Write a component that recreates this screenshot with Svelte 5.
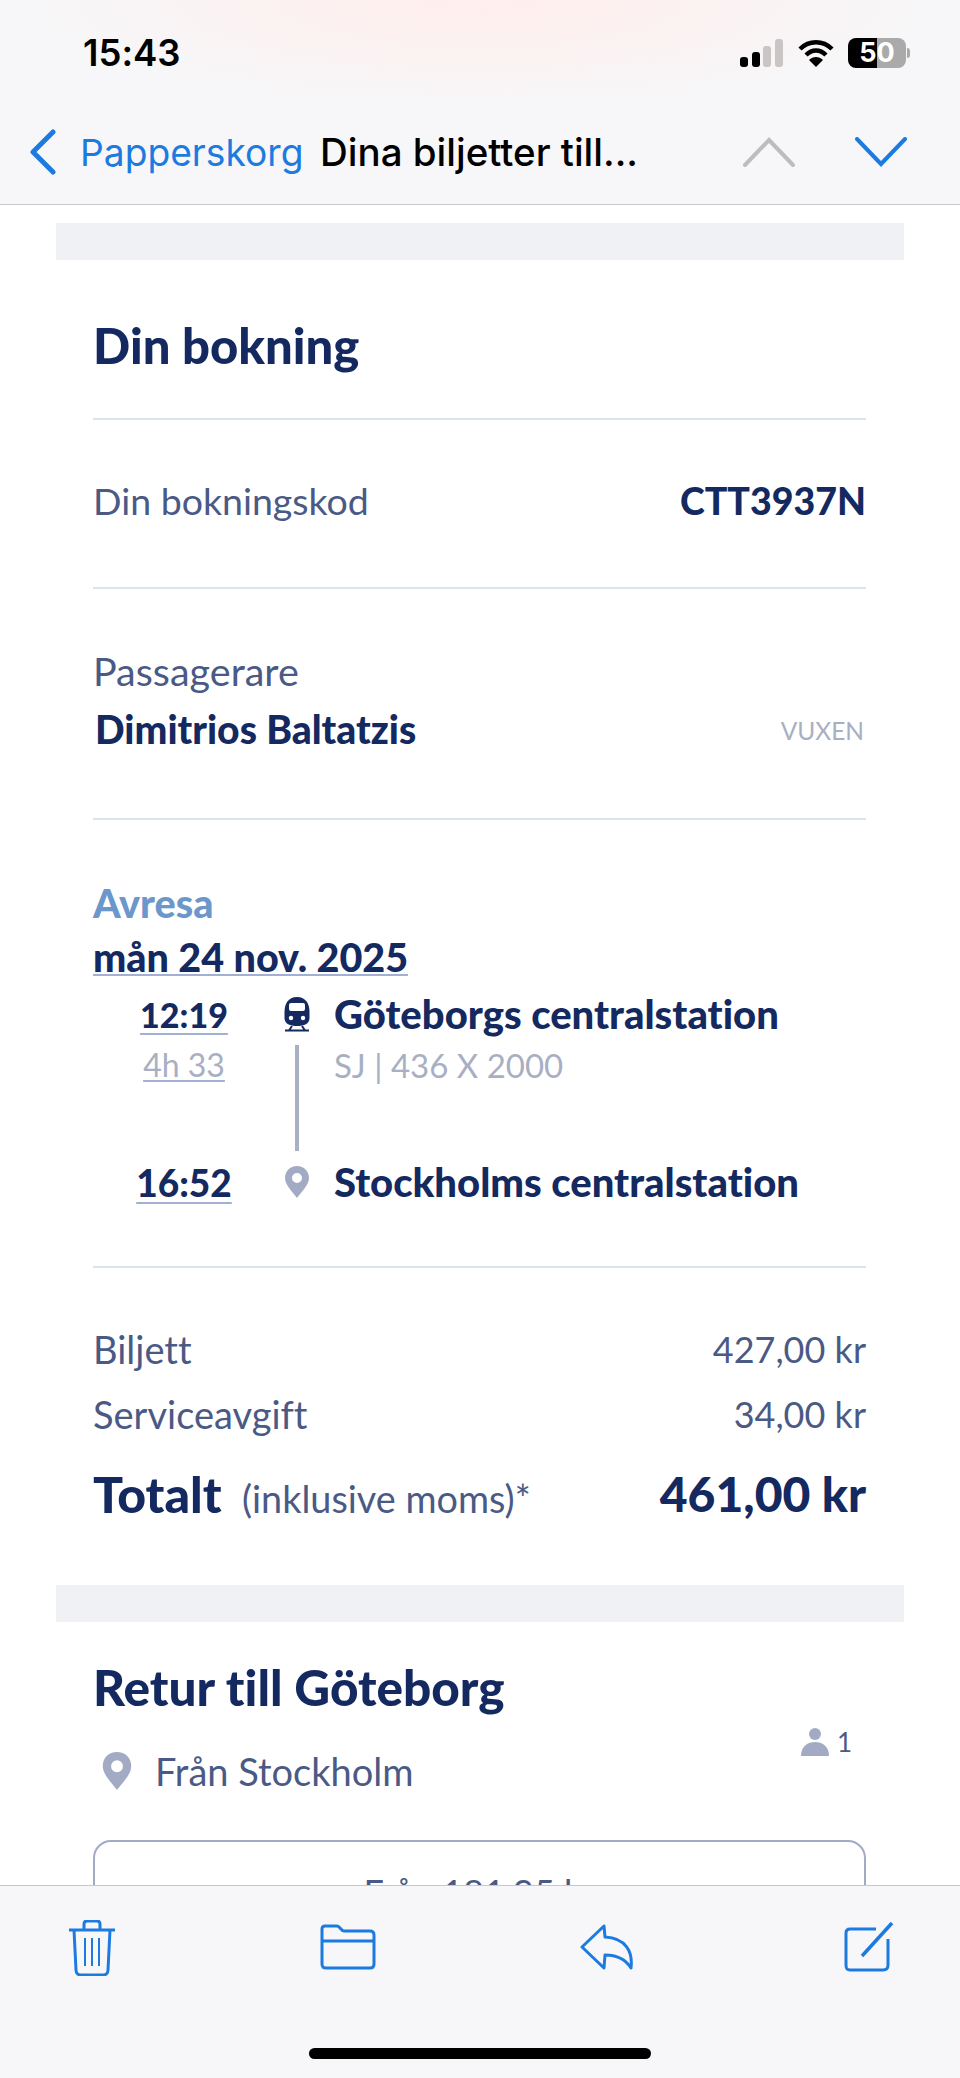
<script>
  const rows = [
    { label: "Biljett", price: "427,00 kr" },
    { label: "Serviceavgift", price: "34,00 kr" }
  ];
</script>

<div class="phone">
  <header>
    <div class="status">
      <span class="clock">15:43</span>
      <div class="status-icons">
        <svg width="44" height="28" viewBox="0 0 44 28">
          <rect x="0" y="18" width="8" height="10" rx="3" fill="#000" />
          <rect x="12" y="13" width="8" height="15" rx="3" fill="#000" />
          <rect x="23" y="7" width="8" height="21" rx="3" fill="#c9c5c5" />
          <rect x="35" y="0" width="8" height="28" rx="3" fill="#c9c5c5" />
        </svg>
        <svg width="36" height="28" viewBox="0 0 36 28">
          <path d="M2 10 C11 1 25 1 34 10" fill="none" stroke="#000" stroke-width="4.5" />
          <path d="M8 16 C14 10 22 10 28 16" fill="none" stroke="#000" stroke-width="4.5" />
          <path d="M18 28 L11 21 C15 17 21 17 25 21 Z" fill="#000" />
        </svg>
        <div class="battery">
          <span class="level">50</span>
        </div>
        <span class="nub"></span>
      </div>
    </div>
    <nav>
      <svg class="back" width="30" height="46" viewBox="0 0 30 46">
        <path d="M25 3 L5 23 L25 43" fill="none" stroke="#1d7be0" stroke-width="5" stroke-linecap="round" stroke-linejoin="round" />
      </svg>
      <span class="back-label">Papperskorg</span>
      <span class="subject">Dina biljetter till...</span>
      <svg class="up" width="52" height="30" viewBox="0 0 52 30">
        <path d="M2 28 L26 3 L50 28" fill="none" stroke="#bdbdbd" stroke-width="4" stroke-linecap="round" />
      </svg>
      <svg class="down" width="52" height="30" viewBox="0 0 52 30">
        <path d="M2 2 L26 27 L50 2" fill="none" stroke="#1d7be0" stroke-width="4" stroke-linecap="round" />
      </svg>
    </nav>
  </header>

  <main>
    <div class="band first"></div>
    <div class="content">
      <h1>Din bokning</h1>
      <div class="line"></div>
      <div class="code-row">
        <span class="muted">Din bokningskod</span>
        <strong>CTT3937N</strong>
      </div>
      <div class="line"></div>
      <div class="passenger">
        <div class="muted">Passagerare</div>
        <div class="passenger-row">
          <strong>Dimitrios Baltatzis</strong>
          <span class="age">VUXEN</span>
        </div>
      </div>
      <div class="line"></div>
      <div class="trip">
        <div class="avresa">Avresa</div>
        <div class="date">mån 24 nov. 2025</div>
        <div class="leg first-leg">
          <div class="time"><u>12:19</u></div>
          <div class="mark">
            <svg width="28" height="36" viewBox="0 0 28 36">
              <path d="M14 1 C5 1 1.5 8 1.5 16 L1.5 22 C1.5 28 7 30 14 30 C21 30 26.5 28 26.5 22 L26.5 16 C26.5 8 23 1 14 1 Z" fill="#14295f" />
              <rect x="6" y="7" width="16" height="8" rx="2" fill="#fff" />
              <circle cx="8" cy="22" r="2.2" fill="#fff" />
              <circle cx="20" cy="22" r="2.2" fill="#fff" />
              <path d="M2 34.5 H26 M6 34.5 L9 30 M22 34.5 L19 30" stroke="#14295f" stroke-width="2" fill="none" />
            </svg>
          </div>
          <strong>Göteborgs centralstation</strong>
        </div>
        <div class="leg-mid">
          <div class="time duration"><u>4h 33</u></div>
          <div class="mark"><span class="rail"></span></div>
          <div class="carrier">SJ | 436 X 2000</div>
        </div>
        <div class="leg">
          <div class="time arrival"><u>16:52</u></div>
          <div class="mark">
            <svg width="26" height="32" viewBox="0 0 26 32">
              <path fill-rule="evenodd" d="M13 32 C8 25 1 19 1 12 C1 5 6 0 13 0 C20 0 25 5 25 12 C25 19 18 25 13 32 Z M13 7 A5 5 0 1 0 13 17 A5 5 0 1 0 13 7 Z" fill="#a3abc4" />
            </svg>
          </div>
          <strong>Stockholms centralstation</strong>
        </div>
      </div>
      <div class="line"></div>
      <div class="prices">
        {#each rows as row}
          <div class="price-row">
            <span class="muted label">{row.label}</span>
            <span class="muted">{row.price}</span>
          </div>
        {/each}
        <div class="total-row">
          <div><b class="total-label">Totalt</b> <span class="muted incl">(inklusive moms)*</span></div>
          <b>461,00 kr</b>
        </div>
      </div>
    </div>
    <div class="band"></div>
    <div class="content">
      <h2>Retur till Göteborg</h2>
      <div class="from-row">
        <div class="from">
          <svg width="32" height="38" viewBox="0 0 26 32">
            <path fill-rule="evenodd" d="M13 32 C8 25 1 19 1 12 C1 5 6 0 13 0 C20 0 25 5 25 12 C25 19 18 25 13 32 Z M13 7 A5 5 0 1 0 13 17 A5 5 0 1 0 13 7 Z" fill="#a3abc4" />
          </svg>
          <span class="muted">Från Stockholm</span>
        </div>
        <div class="people">
          <svg width="28" height="28" viewBox="0 0 28 28">
            <circle cx="14" cy="6" r="6" fill="#a3abc4" />
            <path d="M0 28 C0 18 7 14 14 14 C21 14 28 18 28 28 Z" fill="#a3abc4" />
          </svg>
          <span>1</span>
        </div>
      </div>
      <div class="offer">Från 181,95 kr</div>
    </div>
  </main>

  <footer>
    <div class="tools">
      <svg width="48" height="56" viewBox="0 0 48 56" fill="none" stroke="#1d7be0" stroke-width="3">
        <path d="M1 10 H47" />
        <path d="M16 9 V4 C16 2 17 1 19 1 H29 C31 1 32 2 32 4 V9" />
        <path d="M6 10 L8 50 C8 53 10 55 13 55 H35 C38 55 40 53 40 50 L42 10" />
        <path d="M17 18 V46 M24 18 V46 M31 18 V46" stroke-width="2" />
      </svg>
      <svg class="folder" width="56" height="46" viewBox="0 0 56 46" fill="none" stroke="#1d7be0" stroke-width="3">
        <path d="M2 40 V5 C2 3 3 2 5 2 H17 C20 2 21 7 24 7 H50 C53 7 54 9 54 11 V40 C54 43 52 44 50 44 H6 C3 44 2 43 2 40 Z" />
        <path d="M2 17 H54" />
      </svg>
      <svg class="reply" width="54" height="46" viewBox="0 0 54 46" fill="none" stroke="#1d7be0" stroke-width="3" stroke-linejoin="round">
        <path d="M24 2 L2 23 L24 44 L25 31 C38 31 46 36 51 44 C53 28 46 14 25 13 Z" />
      </svg>
      <svg width="50" height="52" viewBox="0 0 50 52" fill="none" stroke="#1d7be0" stroke-width="3">
        <path d="M32 9 H6 C3 9 2 11 2 13 V45 C2 49 3 50 6 50 H39 C42 50 44 49 44 45 V19" />
        <path d="M18 36 L48 3" stroke-width="3.5" />
      </svg>
    </div>
    <div class="home"></div>
  </footer>
</div>

<style>
  :global(body) {
    background: #fff;
  }

  .phone {
    width: 960px;
    height: 2078px;
    display: flex;
    flex-direction: column;
    overflow: hidden;
    font-family: Lato, "Noto Sans", sans-serif;
    font-variant-ligatures: none;
    color: #14295f;
  }

  /* Top bars */
  header {
    height: 205px;
    box-sizing: border-box;
    border-bottom: 1px solid #c8c8ca;
    background: radial-gradient(ellipse 480px 110px at 50% 0, #ffeeec, transparent), #f7f7f9;
    font-family: Inter, "Liberation Sans", sans-serif;
  }

  .status {
    height: 100px;
    padding: 6px 50px 0 83px;
    box-sizing: border-box;
    display: flex;
    justify-content: space-between;
    align-items: center;
  }

  .clock {
    font-size: 36.5px;
    font-weight: 600;
    color: #000;
  }

  .status-icons {
    display: flex;
    align-items: center;
    gap: 14px;
  }

  .battery {
    width: 58px;
    height: 30px;
    border-radius: 8px;
    background: linear-gradient(90deg, #000 50%, #aaa 50%);
    color: #fff;
    font-size: 27px;
    font-weight: 700;
    text-align: center;
    line-height: 30px;
  }

  .nub {
    width: 3px;
    height: 10px;
    background: #aaa;
    border-radius: 0 3px 3px 0;
    margin-left: -13px;
  }

  nav {
    height: 104px;
    display: flex;
    align-items: center;
    padding: 0 0 0 28px;
    font-size: 37.2px;
  }

  .back-label {
    margin-left: 22px;
    width: 222px;
    flex: none;
    color: #1d7be0;
    white-space: nowrap;
  }

  .subject {
    margin-left: 18px;
    width: 423px;
    flex: none;
    color: #000;
    font-size: 38.5px;
    font-weight: 500;
    white-space: nowrap;
  }

  .down {
    margin-left: 60px;
  }

  /* Mail body */
  main {
    flex: 1;
    min-height: 0;
    overflow: hidden;
    background: #fff;
    padding-top: 18px;
  }

  .band {
    height: 37px;
    margin: 0 56px;
    background: #f0f1f5;
  }

  .content {
    padding: 0 94px 0 93px;
  }

  h1 {
    margin: 0;
    padding: 58px 0 45px;
    font-size: 49px;
    line-height: 55px;
    font-weight: 900;
  }

  h2 {
    margin: 0;
    padding: 38px 0 0;
    font-size: 49.5px;
    line-height: 55px;
    font-weight: 900;
  }

  .line {
    height: 2px;
    background: #dde3ea;
  }

  .muted {
    color: #4a5a85;
  }

  .code-row {
    height: 167px;
    padding-bottom: 6px;
    box-sizing: border-box;
    display: flex;
    justify-content: space-between;
    align-items: center;
    font-size: 37.5px;
  }

  strong {
    font-weight: 900;
  }

  .passenger {
    height: 229px;
    padding-top: 60px;
    box-sizing: border-box;
    font-size: 39.5px;
    line-height: 44px;
  }

  .passenger-row {
    margin-top: 12px;
    padding: 0 2px;
    display: flex;
    justify-content: space-between;
    align-items: center;
    font-size: 39px;
  }

  .age {
    color: #a9afc2;
    font-size: 24.5px;
    margin-top: 4px;
  }

  .trip {
    height: 446px;
    padding-top: 61px;
    box-sizing: border-box;
    font-size: 36px;
  }

  .avresa {
    color: #6c97cb;
    font-weight: 900;
    line-height: 44px;
    font-size: 39.5px;
  }

  .date {
    margin-top: 15px;
    font-weight: 900;
    line-height: 34px;
    font-size: 39.5px;
    width: fit-content;
    border-bottom: 2px solid #a3b0d6;
  }

  .leg,
  .leg-mid {
    display: flex;
    padding-left: 35px;
    align-items: center;
  }

  .leg {
    height: 56px;
    font-weight: 900;
    font-size: 40px;
  }

  .first-leg {
    margin-top: 10px;
  }

  .leg-mid {
    height: 112px;
    align-items: flex-start;
  }

  .time {
    width: 112px;
    flex: none;
    text-align: center;
    font-size: 34px;
  }

  .arrival {
    font-size: 37px;
  }

  .time u {
    text-decoration-color: #a3b0d6;
    text-underline-offset: 5px;
    text-decoration-thickness: 2px;
  }

  .duration,
  .carrier {
    color: #a9afc2;
    padding-top: 3px;
  }

  .duration {
    font-size: 32px;
  }

  .duration u {
    text-underline-offset: 3px;
  }

  .carrier {
    font-size: 33px;
  }

  .mark {
    display: flex;
    justify-content: center;
    width: 28px;
    height: 100%;
    flex: none;
    margin: 0 23px 0 43px;
    align-items: center;
  }

  .rail {
    width: 4px;
    height: 106px;
    background: #a9b0c6;
  }

  .prices {
    padding: 48px 0 44px;
    font-size: 36px;
  }

  .label {
    font-size: 38px;
  }

  .price-row {
    display: flex;
    justify-content: space-between;
    height: 65px;
    align-items: center;
  }

  .total-row {
    display: flex;
    justify-content: space-between;
    align-items: center;
    height: 95px;
    font-size: 48px;
  }

  .total-row b {
    font-weight: 900;
  }

  .total-row .total-label {
    font-size: 50px;
  }

  .incl {
    font-size: 37.8px;
    margin-left: 8px;
  }

  .from-row {
    display: flex;
    justify-content: space-between;
    padding: 16px 14px 0 8px;
    font-size: 38px;
    height: 125px;
    box-sizing: border-box;
  }

  .from {
    display: flex;
    align-items: center;
    gap: 22px;
    height: 80px;
  }

  .people {
    display: flex;
    align-items: center;
    gap: 8px;
    height: 44px;
    margin-top: -11px;
    color: #4a5a85;
    font-size: 26px;
  }

  .offer {
    height: 120px;
    box-sizing: border-box;
    border: 2px solid #a3abc4;
    border-radius: 18px;
    text-align: center;
    padding-top: 28px;
    font-size: 36px;
    color: #4a5a85;
  }

  /* Bottom toolbar */
  footer {
    height: 193px;
    box-sizing: border-box;
    border-top: 1px solid #c8c8ca;
    background: #f7f7f9;
    display: flex;
    flex-direction: column;
    align-items: center;
    position: relative;
  }

  .tools {
    width: 100%;
    box-sizing: border-box;
    padding: 34px 66px 0 68px;
    display: flex;
    justify-content: space-between;
    align-items: flex-start;
    height: 162px;
  }

  .folder {
    margin-top: 4px;
  }

  .reply {
    margin: 4px 6px 0 0;
  }

  .home {
    width: 342px;
    height: 11px;
    border-radius: 6px;
    background: #000;
  }
</style>
